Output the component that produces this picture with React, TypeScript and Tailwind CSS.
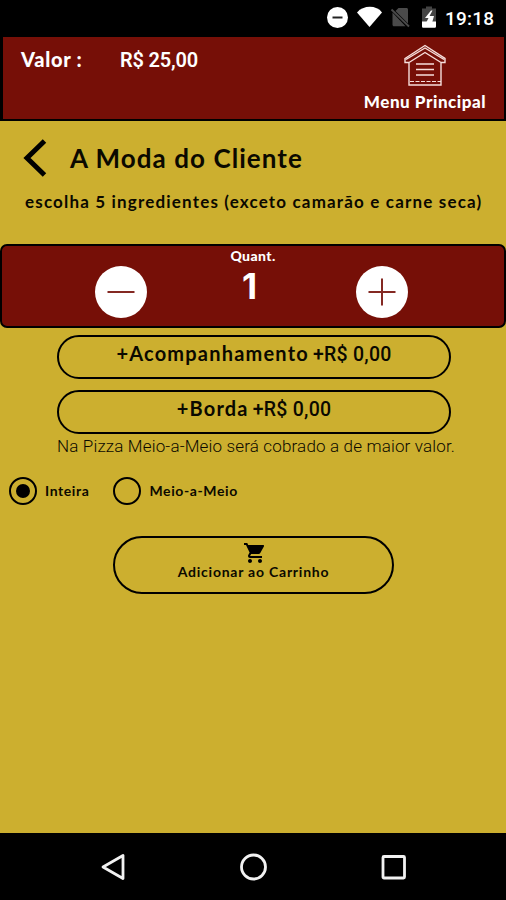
import { useState } from "react";

function StatusBar() {
  return (
    <div className="flex h-[36px] items-center justify-end bg-black pr-[10px] text-white">
      <svg width="118" height="36" viewBox="0 0 118 36" className="shrink-0">
        <circle cx="13.500" cy="17.500" r="10.500" fill="#fff" />
        <path d="M8.500 17.500h10" stroke="#222" strokeWidth="2" />
        <path d="M33 12.400C39.500 5 52.500 5 58 12.400L45.500 27z" fill="#fff" />
        <path d="M71.500 11L74.500 8h8c.9 0 1.500.6 1.500 1.500v14z" fill="#4a4a4a" />
        <path d="M68.500 12.500L81.500 26.300H70c-.9 0-1.500-.6-1.500-1.500z" fill="#4a4a4a" />
        <path d="M67.500 9.500L85 26.500" stroke="#4a4a4a" strokeWidth="1.800" />
        <path d="M98 8.500h4V6.500h6v2h4V22H98z" fill="#444" />
        <path d="M98 21.500h14v4.700c0 1-.6 1.500-1.500 1.500h-11c-1 0-1.500-.5-1.500-1.500z" fill="#fff" />
        <path d="M107 10.500L101 18h3.500l-2.500 5h6l2-7h-4.500l3-5.500z" fill="#fff" />
      </svg>
      <span className="ml-[3px] w-[51px] font-['Roboto',sans-serif] text-[19px] leading-none font-medium tracking-[0.2px]">
        19:18
      </span>
    </div>
  );
}

function Header() {
  return (
    <header className="flex h-[85px] justify-between border-t border-r-2 border-b-2 border-l-[3px] border-black bg-[#760f07] font-bold text-white">
      <div className="flex pt-[11px] pl-[18px] leading-[22px]">
        <span className="w-[99px] text-[20px] font-black tracking-[0.7px]">Valor :</span>
        <span className="font-['Roboto',sans-serif] text-[20px] leading-[24px] font-semibold tracking-[-0.2px]">
          R$ 25,00
        </span>
      </div>
      <button className="mr-[17px] flex w-[124px] flex-col items-center pt-[7px]">
        <svg width="44" height="42" viewBox="0 0 44 42" fill="none" stroke="#f6dedb" strokeWidth="1.400">
          <path d="M2 14.500L22 1.500l20 13v4h-4V41H6V18.500H2zM6 18.500L22 8.500l16 10M3 15.500L22 4l19 11.500" />
          <path d="M13 20h18M13 25.500h18M13 31h18" strokeWidth="1.600" />
          <path d="M7 37.500h31" strokeWidth="1" strokeDasharray="4 1.500" />
        </svg>
        <span className="mt-[5px] text-[17px] leading-[21px] font-black tracking-[0.55px] whitespace-nowrap">
          Menu Principal
        </span>
      </button>
    </header>
  );
}

type RoundButtonProps = {
  plus?: boolean;
  onClick: () => void;
};

function RoundButton({ plus, onClick }: RoundButtonProps) {
  return (
    <button onClick={onClick} className="mt-[20px] size-[52px] rounded-full bg-white">
      <svg width="52" height="52" viewBox="0 0 52 52" stroke="#842923" strokeWidth="2">
        <path d={plus ? "M12.500 26h27M26 12.500v27" : "M12.500 26h27"} />
      </svg>
    </button>
  );
}

type PillButtonProps = {
  name: string;
  price: string;
};

function PillButton({ name, price }: PillButtonProps) {
  return (
    <button className="flex h-[44px] w-[394px] items-baseline justify-center gap-[4px] rounded-full border-2 border-black pt-[4px] text-[20px] leading-[24px] font-bold">
      <span className="tracking-[1.2px]">{name}</span>
      <span className="font-['Roboto',sans-serif] text-[19.5px] font-medium tracking-[0.25px]">{price}</span>
    </button>
  );
}

type RadioProps = {
  label: string;
  checked: boolean;
  onChange: () => void;
};

function Radio({ label, checked, onChange }: RadioProps) {
  return (
    <label className="flex items-center gap-[8px]">
      <input type="radio" name="size" checked={checked} onChange={onChange} className="sr-only" />
      <span className="flex size-[28px] items-center justify-center rounded-full border-[2.500px] border-black">
        {checked && <span className="size-[14px] rounded-full bg-black" />}
      </span>
      <span className="text-[14px] leading-none font-bold tracking-[0.6px]">{label}</span>
    </label>
  );
}

function NavBar() {
  return (
    <nav className="flex h-[67px] items-center justify-between bg-black px-[100px]">
      <svg width="26" height="30" viewBox="0 0 26 30" fill="none" stroke="#f2f2f2" strokeWidth="2.800">
        <path d="M3 15L23 3.500v23z" strokeLinejoin="round" />
      </svg>
      <svg width="30" height="30" viewBox="0 0 30 30" fill="none" stroke="#f2f2f2" strokeWidth="2.800">
        <circle cx="15.500" cy="15" r="12" />
      </svg>
      <svg width="26" height="30" viewBox="0 0 26 30" fill="none" stroke="#f2f2f2" strokeWidth="2.800">
        <rect x="3" y="4.500" width="21.500" height="21.500" rx="1" />
      </svg>
    </nav>
  );
}

export default function App() {
  const [quantity, setQuantity] = useState(1);
  const [half, setHalf] = useState(false);

  return (
    <div className="flex h-[900px] w-[506px] flex-col overflow-hidden bg-[#ccaf2f] font-['Lato',sans-serif] text-[#0b0900]">
      <StatusBar />
      <Header />

      <main className="flex flex-1 flex-col">
        <div className="flex h-[70px] items-center pt-[4px] pl-[23px]">
          <svg width="24" height="40" viewBox="0 0 24 40" fill="none" stroke="#000" strokeWidth="5">
            <path d="M21.500 3L4 20l17.500 17" />
          </svg>
          <h1 className="ml-[23px] text-[26px] leading-none font-bold tracking-[1.05px]">A Moda do Cliente</h1>
        </div>
        <p className="h-[53px] pl-[25px] text-[17px] leading-[22px] font-bold tracking-[1.17px] whitespace-nowrap">
          escolha 5 ingredientes (exceto camarão e carne seca)
        </p>

        <section className="flex h-[84px] shrink-0 justify-between rounded-[7px] border-2 border-black bg-[#760f07] pr-[96px] pl-[93px] text-white">
          <RoundButton onClick={() => setQuantity(Math.max(1, quantity - 1))} />
          <div className="flex flex-col items-center font-black">
            <span className="pt-px pl-[3px] text-[14px] leading-[18px] tracking-[0.4px]">Quant.</span>
            <span className="mt-[4px] mr-[4px] font-['Inter',sans-serif] text-[35px] leading-[35px] font-bold">
              {quantity}
            </span>
          </div>
          <RoundButton plus onClick={() => setQuantity(quantity + 1)} />
        </section>

        <div className="mt-[7px] flex flex-col items-start gap-[11px] pl-[57px]">
          <PillButton name="+Acompanhamento" price="+R$ 0,00" />
          <PillButton name="+Borda" price="+R$ 0,00" />
        </div>
        <p className="mt-px pl-[57px] font-['Roboto',sans-serif] text-[17px] leading-[22px] font-light tracking-[0.16px] whitespace-nowrap">
          Na Pizza Meio-a-Meio será cobrado a de maior valor.
        </p>

        <div className="mt-[20px] flex gap-[24px] pl-[9px]">
          <Radio label="Inteira" checked={!half} onChange={() => setHalf(false)} />
          <Radio label="Meio-a-Meio" checked={half} onChange={() => setHalf(true)} />
        </div>

        <button className="mt-[31px] ml-[113px] flex h-[58px] w-[281px] flex-col items-center rounded-full border-2 border-black pt-[5px]">
          <svg width="20" height="20" viewBox="1 2 20 20" fill="#000">
            <path d="M7 18c-1.100 0-1.990.9-1.990 2S5.900 22 7 22s2-.9 2-2-.9-2-2-2zM1 2v2h2l3.600 7.590-1.350 2.450c-.16.280-.25.610-.25.960 0 1.100.9 2 2 2h12v-2H7.420c-.14 0-.25-.11-.25-.25l.03-.12.9-1.630h7.450c.75 0 1.410-.41 1.750-1.030l3.580-6.490A1 1 0 0 0 20.010 4H5.210l-.94-2H1zm16 16c-1.100 0-1.990.9-1.990 2s.89 2 1.990 2 2-.9 2-2-.9-2-2-2z" />
          </svg>
          <span className="text-[14px] leading-[18px] font-bold tracking-[0.77px]">Adicionar ao Carrinho</span>
        </button>
      </main>

      <NavBar />
    </div>
  );
}
